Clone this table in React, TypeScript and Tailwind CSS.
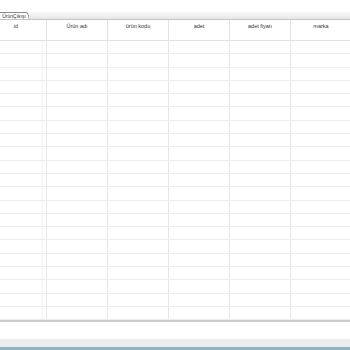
const columns = ["Ürün adı", "ürün kodu", "adet", "adet fiyatı", "marka"];
const rows = Array.from({ length: 21 }, (_, i) => i);

export default function App() {
  return (
    <div className="w-[350px] h-[350px] bg-white flex flex-col overflow-hidden text-[#333]" style={{ fontFamily: '"Liberation Sans", Arial, sans-serif' }}>
      {/* tab strip */}
      <div className="h-[12px] shrink-0"></div>
      <div className="h-[8px] shrink-0 flex items-end bg-gradient-to-b from-[#fafafa] to-[#e6e6e6] border-b border-[#c4c4c4]">
        <div className="h-[7px] px-[2px] flex items-center text-[5px] leading-none bg-white border border-b-0 border-[#8a8a8a] rounded-tr-[3px] skew-x-[12deg] -ml-[3px]">
          <span className="-skew-x-[12deg] pl-[2px]">ÜrünÇıkışı</span>
        </div>
      </div>

      {/* grid */}
      <div className="flex flex-col border-b-2 border-[#cdcdcd] h-[302px] shrink-0 overflow-hidden">
        <div className="flex h-[21px] shrink-0 border-b border-[#e2e2e2] text-[5.5px] text-[#333]">
          <div className="w-[47px] shrink-0 border-r border-[#e2e2e2] text-center pr-[14px] pt-[2px]">id</div>
          {columns.map((c) => (
            <div key={c} className="w-[61px] shrink-0 border-r border-[#e2e2e2] text-center pt-[2px]">
              {c}
            </div>
          ))}
        </div>
        {rows.map((r) => (
          <div key={r} className="flex h-[13.3px] shrink-0 border-b border-[#ededed]">
            <div className="w-[47px] shrink-0 border-r border-[#e6e6e6] relative">
              <div className="absolute left-[42px] top-0 bottom-0 w-px bg-[#f2f2f2]"></div>
            </div>
            {columns.map((c) => (
              <div key={c} className="w-[61px] shrink-0 border-r border-[#e6e6e6]"></div>
            ))}
          </div>
        ))}
      </div>

      <div className="flex-1"></div>
      <div className="h-[8px] shrink-0 bg-[#ededed]"></div>
      <div className="h-[3px] shrink-0 bg-[#8fb4c4]"></div>
    </div>
  );
}
